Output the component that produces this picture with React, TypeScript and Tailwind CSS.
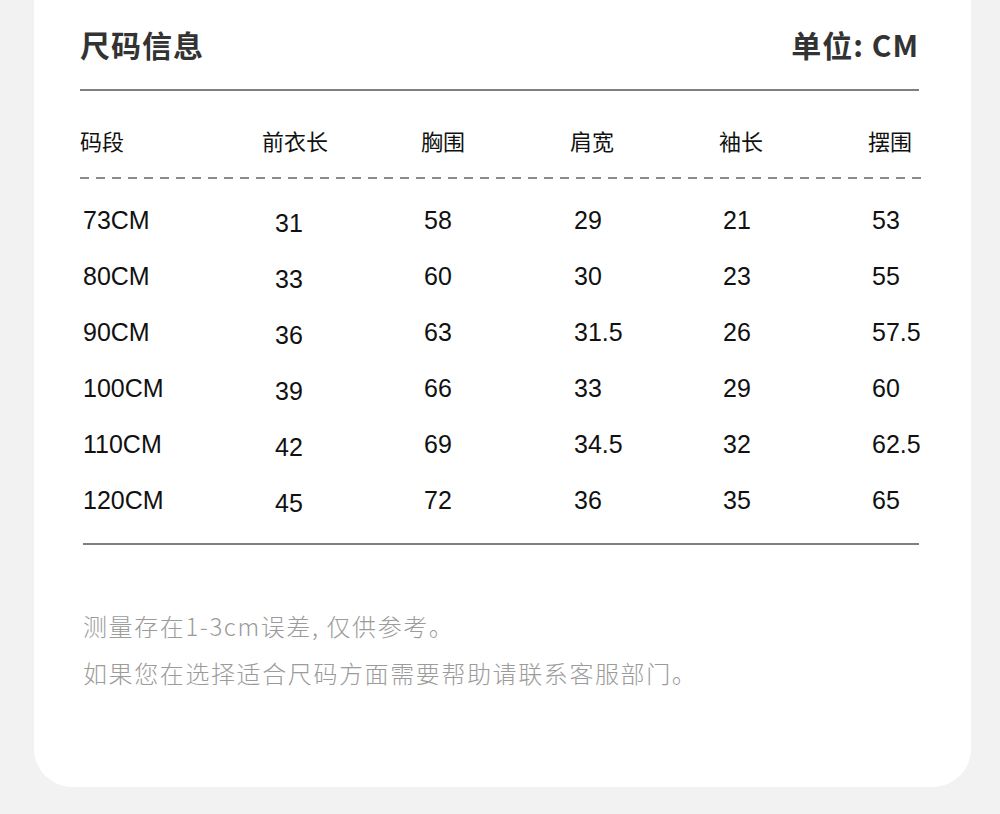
import React from 'react';

const headers = ['码段', '前衣长', '胸围', '肩宽', '袖长', '摆围'];

const rows = [
  ['73CM', '31', '58', '29', '21', '53'],
  ['80CM', '33', '60', '30', '23', '55'],
  ['90CM', '36', '63', '31.5', '26', '57.5'],
  ['100CM', '39', '66', '33', '29', '60'],
  ['110CM', '42', '69', '34.5', '32', '62.5'],
  ['120CM', '45', '72', '36', '35', '65'],
];

const cjk = "font-['Noto_Sans_CJK_SC',sans-serif]";
const latin = "font-['Liberation_Sans','Noto_Sans_CJK_SC',sans-serif]";

const App = () => {
  return (
    <div className="min-h-[814px] bg-[#f2f2f2]">
      <div className="ml-[34px] w-[937px] h-[787px] bg-white rounded-b-[38px] pl-[46px] pr-[52px] flex flex-col">
        <header className="h-[89px] flex items-center justify-between">
          <h1 className={`${cjk} text-[30px] font-bold text-[#333] tracking-[1px]`}>尺码信息</h1>
          <span className={`${cjk} text-[30px] font-bold text-[#333] tracking-[1px]`}>单位: CM</span>
        </header>
        <div className="h-[2px] bg-[#808080]" />

        <div className={`${cjk} h-[86px] pt-[12px] grid grid-cols-[182px_159px_149px_149px_149px_1fr] items-center text-[22px] text-[#111]`}>
          {headers.map((h) => (
            <span key={h}>{h}</span>
          ))}
        </div>
        <div className="h-[2px] mr-[-2px] bg-[repeating-linear-gradient(90deg,#8a8a8a_0px,#8a8a8a_9px,transparent_9px,transparent_16px)]" />

        <div className={`${latin} mt-[14px] pl-[3px] flex flex-col text-[25px] text-[#111]`}>
          {rows.map((r) => (
            <div key={r[0]} className="h-[56px] grid grid-cols-[192px_149px_150px_149px_149px_1fr] items-center">
              {r.map((c, i) => (
                <span key={i} className={i === 1 ? 'pt-[5px]' : ''}>
                  {c}
                </span>
              ))}
            </div>
          ))}
        </div>
        <div className="mt-[14px] ml-[3px] h-[2px] bg-[#808080]" />

        <div className={`${cjk} mt-[57px] pl-[3px] text-[24px] leading-[47px] font-light tracking-[1.6px] text-[#9b9b9b]`}>
          <p>测量存在1-3cm误差, 仅供参考。</p>
          <p>如果您在选择适合尺码方面需要帮助请联系客服部门。</p>
        </div>
      </div>
    </div>
  );
};

export default App;
